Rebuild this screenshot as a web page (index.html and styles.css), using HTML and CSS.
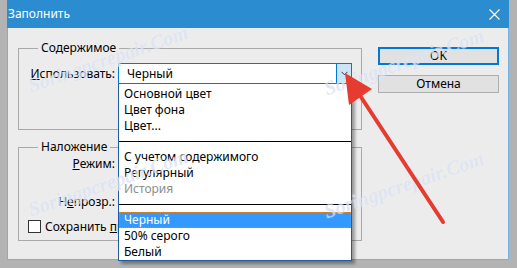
FILE: index.html
```html
<!DOCTYPE html>
<html lang="ru">
<head>
  <meta charset="UTF-8">
  <title>Заполнить</title>
  <link rel="stylesheet" href="styles.css">
</head>
<body>
  <div class="dialog">
    <div class="title-bar">
      <span class="title-text">Заполнить</span>
      <span class="close-btn">
        <svg width="11" height="11" viewBox="0 0 11 11"><path d="M0.5 0.5l10 10M10.5 0.5l-10 10" stroke="#fff" stroke-width="1.1"/></svg>
      </span>
    </div>
    <div class="dialog-body">
      <div class="groups">
        <fieldset class="group group-content">
          <legend>Содержимое</legend>
          <div class="field-row">
            <label class="field-label"><u>И</u>спользовать:</label>
            <div class="combo">
              <span class="combo-value">Черный</span>
              <span class="combo-arrow">
                <svg width="7" height="5" viewBox="0 0 7 5"><path d="M0.5 0.8l3 3 3-3" fill="none" stroke="#333" stroke-width="1"/></svg>
              </span>
              <!-- open dropdown list -->
              <ul class="combo-list">
                <li>Основной цвет</li>
                <li>Цвет фона</li>
                <li>Цвет...</li>
                <li class="sep"></li>
                <li>С учетом содержимого</li>
                <li>Регулярный</li>
                <li class="disabled">История</li>
                <li class="sep"></li>
                <li class="selected">Черный</li>
                <li>50% серого</li>
                <li>Белый</li>
              </ul>
            </div>
          </div>
        </fieldset>
        <fieldset class="group group-blend">
          <legend>Наложение</legend>
          <div class="field-row row-mode">
            <label class="field-label"><u>Р</u>ежим:</label>
          </div>
          <div class="field-row row-opacity">
            <label class="field-label">Н<u>е</u>прозр.:</label>
          </div>
          <div class="check-row">
            <span class="checkbox"></span>
            <span>Сохранить <u>пр</u>озрачность</span>
          </div>
        </fieldset>
      </div>
      <div class="buttons">
        <button class="btn btn-default">OK</button>
        <button class="btn">Отмена</button>
      </div>
    </div>
  </div>

  <!-- watermark -->
  <span class="wm wm-1">Soringpcrepair.Com</span>
  <span class="wm wm-2">Soringpcrepair.Com</span>
  <span class="wm wm-3">Soringpcrepair.Com</span>
  <span class="wm wm-4">Soringpcrepair.Com</span>

  <!-- red pointer arrow -->
  <svg class="arrow" width="517" height="268" viewBox="0 0 517 268">
    <line x1="443" y1="222" x2="359" y2="94" stroke="#e53b30" stroke-width="4" stroke-linecap="round"/>
    <polygon points="345,73 372,89 349,105" fill="#e53b30"/>
  </svg>
</body>
</html>
```

FILE: styles.css
```css
body {
  margin: 0;
  padding: 0;
  width: 517px;
  height: 268px;
  background: #b3b3b3;
  font-family: 'Noto Sans', 'Open Sans', Arial, sans-serif;
  font-size: 12px;
  color: #000;
  overflow: hidden;
}
.dialog {
  margin-left: 7px;
  width: 502px;
}
.title-bar {
  height: 28px;
  background: #2b8ccf;
  display: flex;
  align-items: center;
  justify-content: space-between;
  color: #fff;
}
.title-text {
  padding-left: 1px;
  line-height: 16px;
}
.close-btn {
  display: flex;
  margin-right: 9px;
  margin-top: 1px;
}
.dialog-body {
  box-sizing: border-box;
  height: 232px;
  background: #ececec;
  border: 1px solid #6fb3e8;
  border-top: none;
  padding: 12px 9px 0 10px;
  display: flex;
  gap: 16px;
}
.groups {
  width: 344px;
  display: flex;
  flex-direction: column;
}
.group {
  box-sizing: border-box;
  width: 344px;
  margin: 0;
  padding: 0;
  border: 1px solid #a9a9a9;
}
.group legend {
  margin-left: 19px;
  padding: 0 3px;
  line-height: 16px;
}
.group-content {
  padding: 7px 0 45px;
}
.group-blend {
  margin-top: 9px;
  padding: 0 0 6px;
}
.field-row {
  display: flex;
  align-items: center;
}
.field-label {
  width: 96px;
  text-align: right;
  line-height: 17px;
}
.row-mode {
  height: 17px;
}
.row-opacity {
  height: 17px;
  margin-top: 21px;
}
.check-row {
  display: flex;
  align-items: center;
  gap: 4px;
  height: 16px;
  margin-top: 8px;
  padding-left: 9px;
  white-space: nowrap;
}
.checkbox {
  box-sizing: border-box;
  width: 13px;
  height: 13px;
  border: 1px solid #333;
  background: #fff;
}
.combo {
  position: relative;
  box-sizing: border-box;
  width: 234px;
  height: 21px;
  margin-left: 3px;
  border: 1px solid #0078d7;
  background: #fff;
  display: flex;
}
.combo-value {
  flex: 1;
  padding-left: 8px;
  line-height: 19px;
}
.combo-arrow {
  width: 14px;
  background: #cce4f7;
  border-left: 1px solid #0078d7;
  display: flex;
  align-items: center;
  justify-content: center;
}
.combo-list {
  position: absolute;
  top: calc(100% + 1px);
  left: -1px;
  right: -1px;
  margin: 0;
  padding: 2px 0 0;
  list-style: none;
  background: #fff;
  border: 1px solid #1d5c9e;
  border-top: none;
  box-shadow: 3px 3px 3px rgba(0, 0, 0, 0.35);
  z-index: 5;
}
.combo-list li {
  height: 16px;
  line-height: 16px;
  padding: 0 5px;
  white-space: nowrap;
}
.combo-list li.sep {
  height: 15px;
  padding: 0;
  display: flex;
  align-items: center;
}
.combo-list li.sep::before {
  content: '';
  flex: 1;
  height: 1px;
  background: #000;
}
.combo-list li.disabled {
  color: #8d8d8d;
}
.combo-list li.selected {
  background: #3399ff;
  color: #fff;
  outline: 1px dotted #d9862c;
  outline-offset: -1px;
}
.buttons {
  width: 121px;
  margin-top: 7px;
  display: flex;
  flex-direction: column;
  gap: 10px;
}
.btn {
  box-sizing: border-box;
  width: 121px;
  height: 18px;
  padding: 0;
  margin: 0;
  font-family: inherit;
  font-size: 12px;
  line-height: 14px;
  color: #000;
  background: #e1e1e1;
  border: 1px solid #adadad;
}
.btn-default {
  border: 2px solid #0078d7;
}
/* watermark text */
.wm {
  position: absolute;
  width: 200px;
  text-align: center;
  font-family: 'Liberation Serif', serif;
  font-style: italic;
  font-weight: bold;
  font-size: 20px;
  color: rgba(185, 200, 232, 0.42);
  text-shadow: 0 0 1px rgba(255, 255, 255, 0.7);
  transform: translate(-50%, -50%) rotate(-19deg);
  white-space: nowrap;
  z-index: 8;
  pointer-events: none;
}
.wm-1 { left: 108px; top: 59px; }
.wm-2 { left: 404px; top: 62px; }
.wm-3 { left: 108px; top: 183px; }
.wm-4 { left: 404px; top: 185px; }
.arrow {
  position: absolute;
  left: 0;
  top: 0;
  z-index: 10;
}
```
